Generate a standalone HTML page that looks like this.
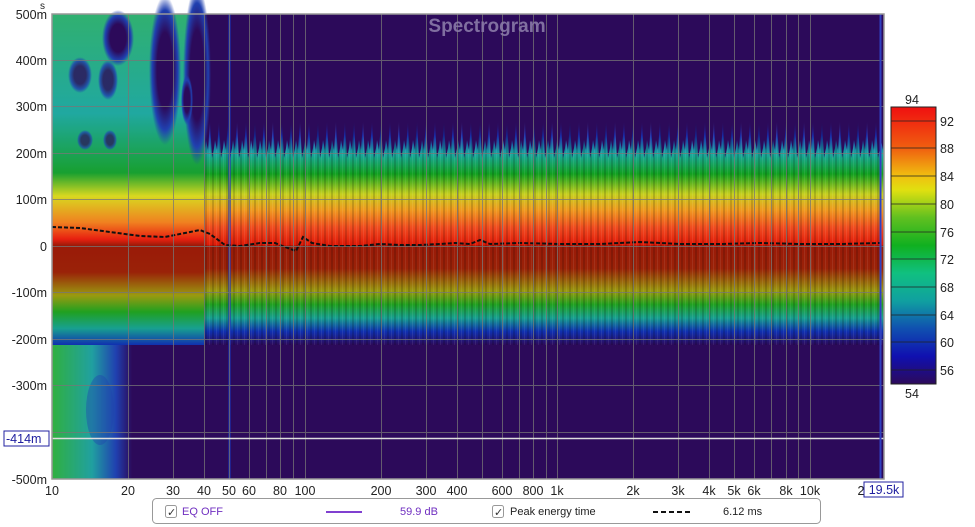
<!DOCTYPE html>
<html><head><meta charset="utf-8"><style>
html,body{margin:0;padding:0;background:#fff;width:975px;height:527px;overflow:hidden;font-family:"Liberation Sans",sans-serif}
svg text{font-family:"Liberation Sans",sans-serif}
</style></head><body>
<svg width="975" height="527" viewBox="0 0 975 527" xmlns="http://www.w3.org/2000/svg">
<defs>
<linearGradient id="band" gradientUnits="userSpaceOnUse" x1="0" y1="120" x2="0" y2="345">
<stop offset="0" stop-color="#2c0a5a"/>
<stop offset="0.07" stop-color="#1a2aa8"/>
<stop offset="0.15" stop-color="#1aa8a0"/>
<stop offset="0.24" stop-color="#12a020"/>
<stop offset="0.33" stop-color="#c8d020"/>
<stop offset="0.40" stop-color="#f09a20"/>
<stop offset="0.48" stop-color="#f04a20"/>
<stop offset="0.555" stop-color="#e01a08"/>
<stop offset="0.56" stop-color="#9a1a08"/>
<stop offset="0.66" stop-color="#9a2208"/>
<stop offset="0.76" stop-color="#9a9a10"/>
<stop offset="0.82" stop-color="#20a020"/>
<stop offset="0.88" stop-color="#18a090"/>
<stop offset="0.94" stop-color="#1030b0"/>
<stop offset="1" stop-color="#2c0a5a"/>
</linearGradient>
<linearGradient id="left" gradientUnits="userSpaceOnUse" x1="0" y1="14" x2="0" y2="345">
<stop offset="0" stop-color="#30b070"/>
<stop offset="0.3" stop-color="#20a8a0"/>
<stop offset="0.48" stop-color="#18a030"/>
<stop offset="0.55" stop-color="#d8d820"/>
<stop offset="0.63" stop-color="#f08020"/>
<stop offset="0.68" stop-color="#e82010"/>
<stop offset="0.7" stop-color="#9a1a08"/>
<stop offset="0.78" stop-color="#9a2208"/>
<stop offset="0.85" stop-color="#9a9a10"/>
<stop offset="0.9" stop-color="#20a020"/>
<stop offset="0.95" stop-color="#18a090"/>
<stop offset="1" stop-color="#1030b0"/>
</linearGradient>
<linearGradient id="lowleft" x1="0" y1="0" x2="1" y2="0">
<stop offset="0" stop-color="#30b040"/>
<stop offset="0.5" stop-color="#20a0a0"/>
<stop offset="0.8" stop-color="#2040b0"/>
<stop offset="1" stop-color="#2c0a5a"/>
</linearGradient>
<linearGradient id="cbar" x1="0" y1="0" x2="0" y2="1">
<stop offset="0" stop-color="#f01010"/>
<stop offset="0.15" stop-color="#f06010"/>
<stop offset="0.25" stop-color="#f0c010"/>
<stop offset="0.3" stop-color="#e0e010"/>
<stop offset="0.4" stop-color="#60c020"/>
<stop offset="0.5" stop-color="#10b020"/>
<stop offset="0.6" stop-color="#10c080"/>
<stop offset="0.7" stop-color="#10a0a0"/>
<stop offset="0.8" stop-color="#1050b0"/>
<stop offset="0.9" stop-color="#1010b0"/>
<stop offset="1" stop-color="#2c0a5a"/>
</linearGradient>
<radialGradient id="hole"><stop offset="0.5" stop-color="#2c0a5a"/><stop offset="0.8" stop-color="#2040b0"/><stop offset="1" stop-color="#2040b0" stop-opacity="0"/></radialGradient>
<pattern id="saw" x="205" y="100" width="9" height="70" patternUnits="userSpaceOnUse">
<polygon points="0,0 9,0 9,48 7,58 5,22 3,50 1,40 0,48" fill="#2c0a5a"/>
</pattern>
<pattern id="stripe" x="205" y="0" width="7" height="10" patternUnits="userSpaceOnUse">
<rect x="0" y="0" width="2" height="10" fill="#000" opacity="0.15"/>
<rect x="4" y="0" width="1" height="10" fill="#fff" opacity="0.08"/>
</pattern>
</defs>
<rect x="52" y="14" width="832" height="465" fill="#2c0a5a"/>
<rect x="200" y="120" width="684" height="225" fill="url(#band)"/>
<rect x="200" y="120" width="684" height="225" fill="url(#stripe)"/>
<rect x="205" y="100" width="679" height="70" fill="url(#saw)"/>
<rect x="52" y="14" width="152" height="331" fill="url(#left)"/>
<rect x="52" y="345" width="80" height="134" fill="url(#lowleft)"/>
<ellipse cx="80" cy="75" rx="12" ry="18" fill="url(#hole)" opacity="0.8"/>
<ellipse cx="108" cy="80" rx="10" ry="20" fill="url(#hole)" opacity="0.8"/>
<ellipse cx="118" cy="38" rx="16" ry="28" fill="url(#hole)"/>
<ellipse cx="165" cy="70" rx="16" ry="75" fill="url(#hole)"/>
<ellipse cx="197" cy="75" rx="14" ry="90" fill="url(#hole)"/>
<ellipse cx="187" cy="100" rx="6" ry="25" fill="url(#hole)"/>
<ellipse cx="85" cy="140" rx="8" ry="10" fill="url(#hole)" opacity="0.7"/>
<ellipse cx="110" cy="140" rx="7" ry="10" fill="url(#hole)" opacity="0.7"/>
<ellipse cx="100" cy="410" rx="14" ry="35" fill="#2040b0" opacity="0.4"/>
<rect x="228" y="14" width="3" height="465" fill="#1a30b0" opacity="0.6"/>
<polyline points="52,227 80,228 110,232 140,236 165,237 185,233 200,230 210,234 225,245 240,246 260,243 275,243 285,247 296,251 303,237 312,243 330,246 360,246 380,244 400,245 420,245 440,244 455,243 470,244 480,240 490,244 520,243 560,244 600,244 640,242 680,244 720,244 760,243 800,244 840,244 880,243" fill="none" stroke="#111" stroke-width="2" stroke-dasharray="4,2"/>
<g stroke="#777" stroke-width="1" opacity="0.75">
<line x1="52" x2="884" y1="60.5" y2="60.5"/><line x1="52" x2="884" y1="106.5" y2="106.5"/><line x1="52" x2="884" y1="153.5" y2="153.5"/><line x1="52" x2="884" y1="199.5" y2="199.5"/><line x1="52" x2="884" y1="246.5" y2="246.5"/><line x1="52" x2="884" y1="292.5" y2="292.5"/><line x1="52" x2="884" y1="339.5" y2="339.5"/><line x1="52" x2="884" y1="385.5" y2="385.5"/><line x1="52" x2="884" y1="432.5" y2="432.5"/>
<line y1="14" y2="479" x1="128.5" x2="128.5"/><line y1="14" y2="479" x1="173.5" x2="173.5"/><line y1="14" y2="479" x1="204.5" x2="204.5"/><line y1="14" y2="479" x1="229.5" x2="229.5"/><line y1="14" y2="479" x1="249.5" x2="249.5"/><line y1="14" y2="479" x1="266.5" x2="266.5"/><line y1="14" y2="479" x1="280.5" x2="280.5"/><line y1="14" y2="479" x1="293.5" x2="293.5"/><line y1="14" y2="479" x1="305.5" x2="305.5"/><line y1="14" y2="479" x1="381.5" x2="381.5"/><line y1="14" y2="479" x1="426.5" x2="426.5"/><line y1="14" y2="479" x1="457.5" x2="457.5"/><line y1="14" y2="479" x1="482.5" x2="482.5"/><line y1="14" y2="479" x1="502.5" x2="502.5"/><line y1="14" y2="479" x1="519.5" x2="519.5"/><line y1="14" y2="479" x1="533.5" x2="533.5"/><line y1="14" y2="479" x1="546.5" x2="546.5"/><line y1="14" y2="479" x1="557.5" x2="557.5"/><line y1="14" y2="479" x1="633.5" x2="633.5"/><line y1="14" y2="479" x1="678.5" x2="678.5"/><line y1="14" y2="479" x1="709.5" x2="709.5"/><line y1="14" y2="479" x1="734.5" x2="734.5"/><line y1="14" y2="479" x1="754.5" x2="754.5"/><line y1="14" y2="479" x1="771.5" x2="771.5"/><line y1="14" y2="479" x1="786.5" x2="786.5"/><line y1="14" y2="479" x1="798.5" x2="798.5"/><line y1="14" y2="479" x1="810.5" x2="810.5"/>
</g>
<line x1="52" x2="884" y1="438.5" y2="438.5" stroke="#ddd" stroke-width="1.5"/>
<line x1="880.5" x2="880.5" y1="14" y2="479" stroke="#3040c0" stroke-width="2"/>
<rect x="52" y="14" width="832" height="465" fill="none" stroke="#999" stroke-width="1.5"/>
<text x="487" y="32" text-anchor="middle" font-size="19" font-weight="bold" fill="#8a7aa8" opacity="0.9">Spectrogram</text>
<g font-size="12.5" fill="#222" text-anchor="end">
<text x="45" y="9" font-size="10">s</text>
<text x="47" y="19">500m</text><text x="47" y="65">400m</text><text x="47" y="111">300m</text><text x="47" y="158">200m</text><text x="47" y="204">100m</text><text x="47" y="251">0</text><text x="47" y="297">-100m</text><text x="47" y="344">-200m</text><text x="47" y="390">-300m</text><text x="47" y="484">-500m</text>
</g>
<rect x="4" y="431" width="45" height="15" fill="#fff" stroke="#2020a0"/>
<text x="6" y="443" font-size="12.5" fill="#2020a0">-414m</text>
<g font-size="12.5" fill="#222" text-anchor="middle">
<text x="52" y="495">10</text><text x="128" y="495">20</text><text x="173" y="495">30</text><text x="204" y="495">40</text><text x="229" y="495">50</text><text x="249" y="495">60</text><text x="280" y="495">80</text><text x="305" y="495">100</text><text x="381" y="495">200</text><text x="426" y="495">300</text><text x="457" y="495">400</text><text x="502" y="495">600</text><text x="533" y="495">800</text><text x="557" y="495">1k</text><text x="633" y="495">2k</text><text x="678" y="495">3k</text><text x="709" y="495">4k</text><text x="734" y="495">5k</text><text x="754" y="495">6k</text><text x="786" y="495">8k</text><text x="810" y="495">10k</text><text x="861" y="495">2</text>
</g>
<rect x="864" y="482" width="39" height="15" fill="#fff" stroke="#2020a0"/>
<text x="884" y="494" font-size="12.5" fill="#2020a0" text-anchor="middle">19.5k</text>
<rect x="891" y="107" width="45" height="277" fill="url(#cbar)" stroke="#222"/>
<g stroke="#222" stroke-width="0.8">
<line x1="891" x2="936" y1="121" y2="121"/><line x1="891" x2="936" y1="148" y2="148"/><line x1="891" x2="936" y1="176" y2="176"/><line x1="891" x2="936" y1="204" y2="204"/><line x1="891" x2="936" y1="232" y2="232"/><line x1="891" x2="936" y1="259" y2="259"/><line x1="891" x2="936" y1="287" y2="287"/><line x1="891" x2="936" y1="315" y2="315"/><line x1="891" x2="936" y1="342" y2="342"/><line x1="891" x2="936" y1="370" y2="370"/>
</g>
<g font-size="12.5" fill="#222">
<text x="905" y="104">94</text><text x="905" y="398">54</text>
<text x="940" y="126">92</text><text x="940" y="153">88</text><text x="940" y="181">84</text><text x="940" y="209">80</text><text x="940" y="237">76</text><text x="940" y="264">72</text><text x="940" y="292">68</text><text x="940" y="320">64</text><text x="940" y="347">60</text><text x="940" y="375">56</text>
</g>
<rect x="152.5" y="498.5" width="668" height="25" rx="4" fill="#fff" stroke="#999"/>
<rect x="165.5" y="505.5" width="11" height="12" rx="2" fill="#fff" stroke="#999"/>
<text x="167" y="516" font-size="11" fill="#333">✓</text>
<text x="182" y="515" font-size="11" fill="#7030c0">EQ OFF</text>
<line x1="326" x2="362" y1="512" y2="512" stroke="#8040d0" stroke-width="2"/>
<text x="400" y="515" font-size="11" fill="#7030c0">59.9 dB</text>
<rect x="492.5" y="505.5" width="11" height="12" rx="2" fill="#fff" stroke="#999"/>
<text x="494" y="516" font-size="11" fill="#333">✓</text>
<text x="510" y="515" font-size="11" fill="#222">Peak energy time</text>
<line x1="653" x2="690" y1="512" y2="512" stroke="#111" stroke-width="2" stroke-dasharray="5,3"/>
<text x="723" y="515" font-size="11" fill="#222">6.12 ms</text>
</svg>
</body></html>
